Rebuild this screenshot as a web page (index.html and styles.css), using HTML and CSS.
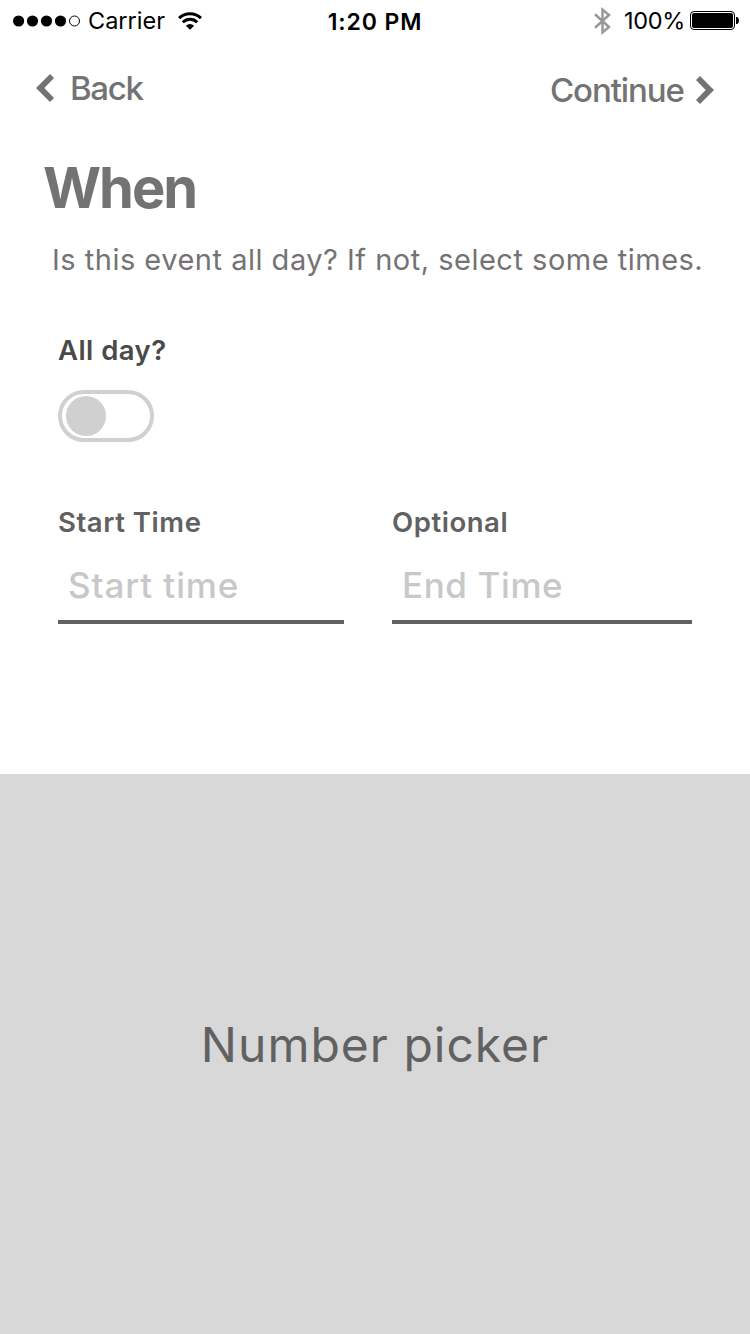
FILE: index.html
```html
<!DOCTYPE html>
<html lang="en">
<head>
<meta charset="utf-8">
<title>When</title>
<link rel="stylesheet" href="styles.css">
</head>
<body>
<div class="screen">
  <header class="status">
    <div class="status-left">
      <svg class="signal" width="68" height="12" viewBox="0 0 68 12">
        <circle cx="5.6" cy="6" r="5.6"/><circle cx="19.5" cy="6" r="5.6"/><circle cx="33.5" cy="6" r="5.6"/><circle cx="47.5" cy="6" r="5.6"/>
        <circle cx="61.5" cy="6" r="5" fill="none" stroke="#000" stroke-width="1"/>
      </svg>
      <span class="carrier">Carrier</span>
      <svg class="wifi" width="24" height="18" viewBox="0 0 24 18" fill="none" stroke="#000">
        <path d="M1 6.1C7 .2 17 .2 23 6.1" stroke-width="3"/>
        <path d="M4.8 10.2C9 6.2 15 6.2 19.2 10.2" stroke-width="2.9"/>
        <path d="M12 17.8L7.9 13.7Q12 10.4 16.1 13.7Z" fill="#000" stroke="none"/>
      </svg>
    </div>
    <span class="clock">1:20 PM</span>
    <div class="status-right">
      <svg class="bluetooth" width="17" height="28" viewBox="0 0 17 28" fill="none" stroke="#999" stroke-width="2.5">
        <path d="M1 7.3L15 20L8.5 25.4V2.6L15 8L1 20.7"/>
      </svg>
      <span class="percent">100%</span>
      <svg class="battery" width="49" height="19" viewBox="0 0 49 19">
        <rect x=".5" y=".5" width="44" height="18" rx="3.5" fill="none" stroke="#000"/>
        <rect x="2" y="2" width="41" height="15" rx="2"/>
        <path d="M46 6h1.2Q49 6.5 49 9.5T47.2 13H46Z"/>
      </svg>
    </div>
  </header>
  <nav class="nav">
    <a class="nav-link back">
      <svg width="19" height="28" viewBox="0 0 19 28" fill="#737373"><path d="M0 14L14 0L18 4L8.3 14L18 24L14 28Z"/></svg>
      <span>Back</span>
    </a>
    <a class="nav-link continue">
      <span>Continue</span>
      <svg width="19" height="28" viewBox="0 0 19 28" fill="#737373"><path d="M18 14L4 0L0 4L9.7 14L0 24L4 28Z"/></svg>
    </a>
  </nav>
  <main class="content">
    <h1 class="title">When</h1>
    <p class="subtitle">Is this event all day? If not, select some times.</p>
    <section class="all-day">
      <div class="label label-dark">All day?</div>
      <div class="toggle"><div class="knob"></div></div>
    </section>
    <section class="times">
      <div class="field start">
        <div class="label">Start Time</div>
        <div class="input input-start">Start time</div>
      </div>
      <div class="field end">
        <div class="label optional">Optional</div>
        <div class="input input-end">End Time</div>
      </div>
    </section>
  </main>
  <section class="picker"><span>Number picker</span></section>
</div>
</body>
</html>
```
FILE: styles.css
```css
* { box-sizing: border-box; margin: 0; }
body { background: #fff; font-family: Inter, "Liberation Sans", sans-serif; }
.screen { width: 750px; height: 1334px; display: flex; flex-direction: column; overflow: hidden; white-space: nowrap; }
.status { height: 41px; flex: none; display: grid; grid-template-columns: 1fr auto 1fr; align-items: center; padding: 0 11px 0 13px; font-size: 23.5px; line-height: 40px; color: #000; }
.status-left, .status-right { display: flex; align-items: center; height: 40px; }
.status-left { margin-bottom: 1px; }
.status-right { justify-content: flex-end; margin-bottom: 1px; }
.carrier { margin-left: 7px; width: 77px; }
.wifi { margin-left: 13px; }
.clock { font-weight: 600; font-size: 23px; line-height: 40px; padding-top: 2px; letter-spacing: .9px; margin-right: 2px; }
.percent { margin-left: 13px; width: 61px; letter-spacing: -.3px; }
.battery { margin-left: 5px; }
.nav { height: 98px; flex: none; display: flex; justify-content: space-between; padding: 27px 35px 0 36px; }
.nav-link { display: flex; align-items: center; height: 40px; font-size: 33px; font-weight: 500; line-height: 40px; color: #737373; }
.back span { margin-left: 15px; letter-spacing: -1.3px; }
.continue { margin-top: 2px; }
.continue svg { margin-bottom: 1px; }
.continue span { width: 146px; letter-spacing: -1.1px; }
.content { height: 635px; flex: none; }
.title { padding: 14px 0 0 43px; font-size: 56px; line-height: 70px; font-weight: 700; letter-spacing: -2px; color: #737373; }
.subtitle { padding: 17px 0 0 52px; font-size: 29px; line-height: 40px; letter-spacing: .5px; color: #737373; }
.all-day { padding: 50px 0 0 58px; }
.label { font-size: 27.5px; line-height: 40px; font-weight: 600; letter-spacing: .55px; color: #616161; }
.label-dark { letter-spacing: .45px; color: #4a4a4a; }
.toggle { width: 96px; height: 52px; margin-top: 20px; padding: 2px 4px; border: 4px solid #d0d0d0; border-radius: 26px; }
.knob { width: 40px; height: 40px; border-radius: 50%; background: #d0d0d0; }
.times { display: grid; grid-template-columns: 286px 300px; gap: 48px; padding: 60px 0 0 58px; }
.input { height: 82px; padding: 23px 0 0 10px; border-bottom: 4px solid #636161; font-size: 35px; line-height: 40px; font-weight: 500; color: #c8c8c8; }
.input-start { letter-spacing: .9px; }
.input-end { letter-spacing: .6px; }
.picker { flex: 1; display: flex; align-items: center; justify-content: center; padding-bottom: 19px; background: #d8d8d8; color: #616161; font-size: 48px; letter-spacing: 1px; }
```
